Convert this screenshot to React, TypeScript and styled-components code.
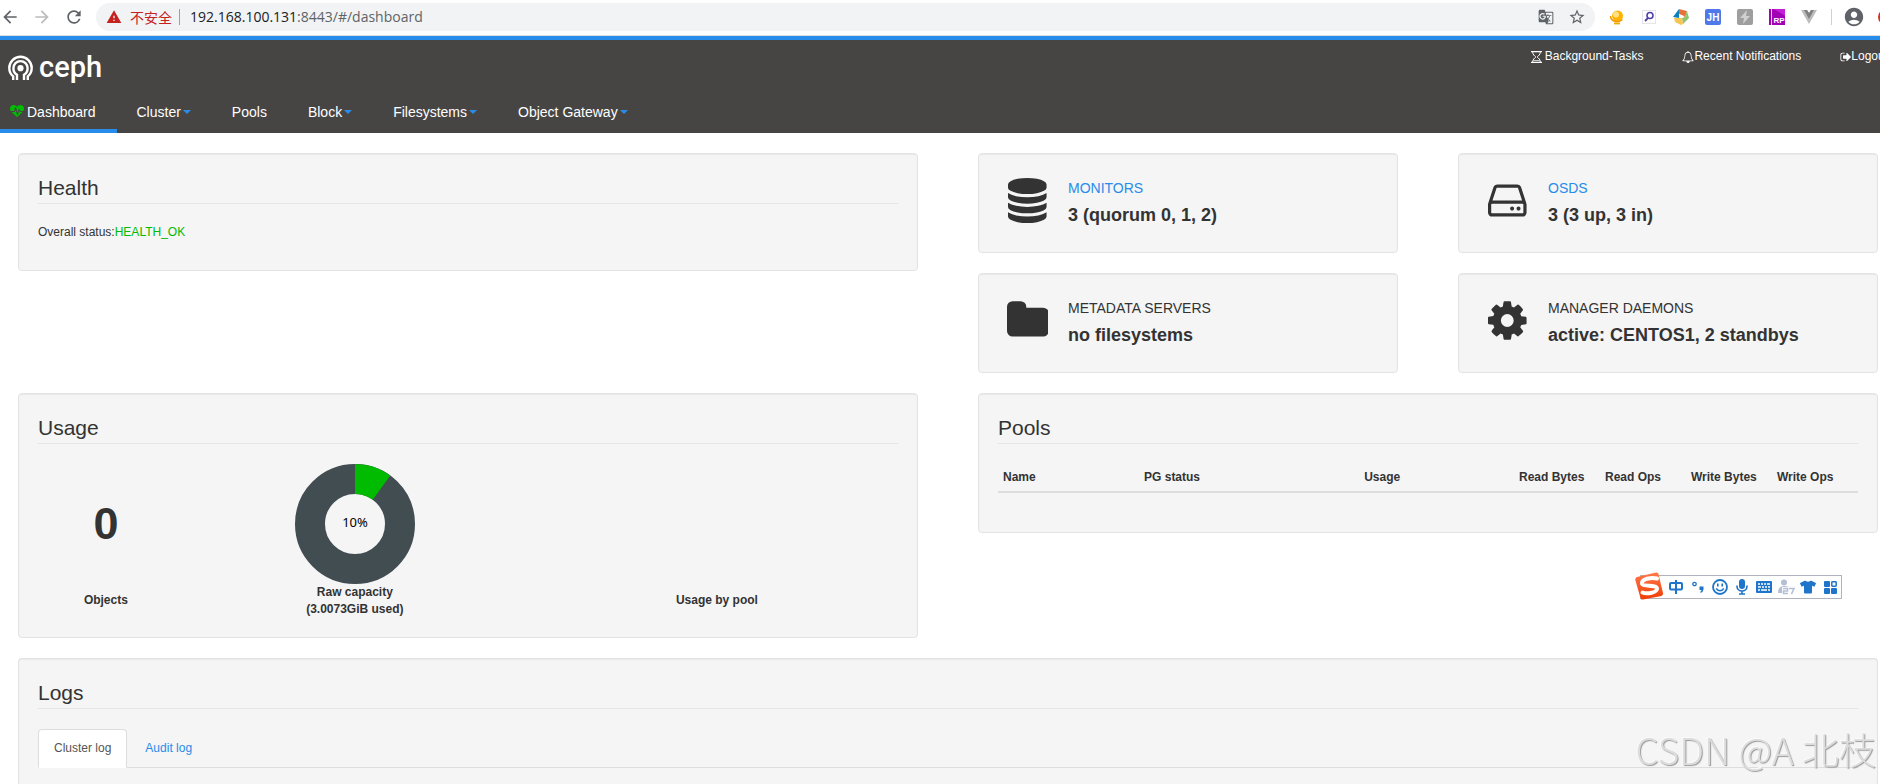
import React, { useState } from "react";
import styled, { createGlobalStyle } from "styled-components";
import {
  MdArrowBack,
  MdArrowForward,
  MdRefresh,
  MdWarning,
  MdGTranslate,
  MdStarBorder,
  MdAccountCircle,
} from "react-icons/md";
import { FaTshirt } from "react-icons/fa";

const color = {
  blue: "#288cea",
  dark: "#474544",
  green: "#00bb00",
  slate: "#424d52",
  text: "#333333",
  well: "#f5f5f5",
  ime: "#1f75c9",
};

const GlobalStyle = createGlobalStyle`
  *, *::before, *::after { box-sizing: border-box; }
  body {
    margin: 0;
    background: #fff;
    color: ${color.text};
    font-family: "Liberation Sans", Arial, sans-serif;
    font-size: 12px;
    line-height: 17px;
  }
  a { text-decoration: none; }
  button { font: inherit; border: 0; background: none; padding: 0; }
  h1, h2, h3, p, ul { margin: 0; padding: 0; font-weight: 400; }
  ul { list-style: none; }
  svg { display: block; flex: none; }
`;

const Shell = styled.div`
  display: flex;
  flex-direction: column;
  height: 100vh;
  overflow: hidden;
`;

/* Browser chrome */

const BrowserBar = styled.div`
  display: flex;
  align-items: center;
  flex: none;
  height: 36px;
  padding-bottom: 2px;
  border-bottom: 1px solid #dadce0;
  overflow: hidden;
`;

const NavButtons = styled.div`
  display: flex;
  gap: 12px;
  margin-right: 12px;
`;

const IconButton = styled.button<{ $tone?: string }>`
  display: flex;
  align-items: center;
  justify-content: center;
  flex: none;
  color: ${(p) => p.$tone ?? "#5f6368"};
`;

const AddressBar = styled.div`
  display: flex;
  align-items: center;
  flex: 1;
  height: 28px;
  padding: 0 9px 0 10px;
  border-radius: 14px;
  background: #f1f3f4;
  font-family: "Open Sans", "Noto Sans CJK SC", sans-serif;
  font-size: 14px;
  line-height: 20px;
`;

const Insecure = styled.span`
  display: flex;
  align-items: center;
  gap: 8px;
  padding-right: 7px;
  border-right: 1px solid #9aa0a6;
  margin-right: 10px;
  color: #c5221f;
  font-family: "Noto Sans CJK SC", sans-serif;
  line-height: 16px;
  white-space: nowrap;
`;

const Host = styled.label`
  color: #202124;
`;

const PathInput = styled.input`
  flex: 1;
  min-width: 0;
  padding: 0;
  border: 0;
  outline: 0;
  background: none;
  color: #5f6368;
  font: inherit;
`;

const AddressActions = styled.div`
  display: flex;
  gap: 14px;
`;

const Extensions = styled.div`
  display: flex;
  align-items: center;
  gap: 16px;
  margin-left: 14px;
`;

const ExtDivider = styled.span`
  width: 1px;
  height: 16px;
  margin: 0 11px 0 14px;
  background: #cfd1d4;
`;

const UpdateDot = styled.span`
  flex: none;
  width: 16px;
  height: 16px;
  margin: 0 -14px 0 13px;
  border-radius: 50%;
  background: #d93025;
`;

/* Ceph header */

const Header = styled.header`
  flex: none;
  border-top: 4px solid ${color.blue};
  background: ${color.dark};
  color: #fff;
  overflow: hidden;
`;

const BrandRow = styled.div`
  display: flex;
  justify-content: space-between;
  align-items: flex-start;
  height: 51px;
`;

const Brand = styled.a`
  display: flex;
  align-items: flex-start;
  gap: 6px;
  padding: 15px 0 0 8px;
  color: #fff;
  font: 500 29px/24px Roboto, sans-serif;
`;

const Utilities = styled.ul`
  display: flex;
  gap: 39px;
  margin-right: -8px;
  padding-top: 8px;
  white-space: nowrap;
`;

const UtilityLink = styled.a<{ $gap?: number }>`
  display: flex;
  align-items: center;
  gap: ${(p) => p.$gap ?? 0}px;
  color: #fff;
`;

const MainNav = styled.ul`
  display: flex;
  font-size: 14px;
  line-height: 20px;
`;

const NavLink = styled.a<{ $active?: boolean }>`
  display: flex;
  align-items: center;
  gap: ${(p) => (p.$active ? 3 : 2)}px;
  height: 42px;
  padding: 4px 21px 0 ${(p) => (p.$active ? 10 : 20)}px;
  border-bottom: 4px solid ${(p) => (p.$active ? color.blue : "transparent")};
  color: #fff;
  white-space: nowrap;
`;

const Caret = styled.span`
  border: 4px solid transparent;
  border-top-color: ${color.blue};
  border-bottom: 0;
`;

/* Dashboard */

const Dashboard = styled.main`
  display: grid;
  grid-template-columns: minmax(0, 1fr) minmax(0, 1fr);
  grid-template-rows: auto auto 1fr;
  gap: 20px 60px;
  align-items: start;
  flex: 1;
  min-height: 0;
  padding: 20px 2px 0 18px;
`;

const Well = styled.section<{ $wide?: boolean }>`
  padding: 19px;
  border: 1px solid #e3e3e3;
  border-radius: 4px;
  background: ${color.well};
  box-shadow: inset 0 1px 1px rgba(0, 0, 0, 0.05);
  grid-column: ${(p) => (p.$wide ? "1 / -1" : "auto")};
`;

const Legend = styled.h2`
  margin-bottom: 20px;
  border-bottom: 1px solid #e5e5e5;
  font-size: 21px;
  line-height: 30px;
`;

const Status = styled.p`
  margin-bottom: 10px;
`;

const Ok = styled.span`
  color: ${color.green};
`;

const StatGrid = styled.div`
  display: grid;
  grid-template-columns: 1fr 1fr;
  gap: 20px 60px;
`;

const StatCard = styled(Well)`
  display: flex;
  align-items: flex-start;
  height: 100px;
  padding-top: 4px;
  padding-left: 26px;
`;

const StatIcon = styled.div`
  display: flex;
  justify-content: center;
  width: 45px;
  margin: 20px 18px 0 0;
`;

const StatLabel = styled.h3`
  padding-top: 20px;
  font-size: 14px;
  line-height: 20px;
`;

const StatLink = styled.a`
  color: ${color.blue};
`;

const StatValue = styled.p`
  padding-top: 4px;
  font-size: 18px;
  font-weight: 700;
  line-height: 26px;
`;

const UsageGrid = styled.div`
  display: grid;
  grid-template-columns: 3fr 8fr 8fr;
  grid-template-rows: 120px 34px;
  justify-items: center;
  align-items: center;
  font-weight: 700;
  text-align: center;
`;

const ObjectCount = styled.div`
  font-size: 45px;
  line-height: 50px;
`;

const Capacity = styled.figure`
  grid-column: 2;
  grid-row: 1 / span 2;
  display: flex;
  flex-direction: column;
  align-items: center;
  margin: 0;
`;

const Caption = styled.div<{ $column: number }>`
  grid-column: ${(p) => p.$column};
  grid-row: 2;
  padding-bottom: 2px;
`;

const PoolTable = styled.table`
  width: 100%;
  margin-bottom: 20px;
  border-collapse: collapse;
  table-layout: fixed;
`;

const PoolHead = styled.th<{ $width: number }>`
  width: ${(p) => p.$width}%;
  padding: 5px;
  border-bottom: 2px solid #ddd;
  text-align: left;
  white-space: nowrap;
`;

const LogsWell = styled(Well)`
  align-self: stretch;
  border-bottom: 0;
  border-radius: 4px 4px 0 0;
`;

const Tabs = styled.div`
  display: flex;
  gap: 2px;
  border-bottom: 1px solid #ddd;
`;

const Tab = styled.button<{ $active: boolean }>`
  margin-bottom: -1px;
  padding: 10px 15px;
  border: 1px solid ${(p) => (p.$active ? "#ddd" : "transparent")};
  border-bottom-color: ${(p) => (p.$active ? "#fff" : "transparent")};
  border-radius: 4px 4px 0 0;
  background: ${(p) => (p.$active ? "#fff" : "transparent")};
  color: ${(p) => (p.$active ? "#555" : color.blue)};
  cursor: pointer;
`;

/* Floating layers */

const ImeBar = styled.div`
  position: fixed;
  top: 575px;
  right: 38px;
  display: flex;
  align-items: center;
  gap: 6px;
  height: 24px;
  padding: 0 3px 0 27px;
  border: 1px solid #b0b3bd;
  background: #fff;
  color: ${color.ime};
`;

const ImeLogo = styled.span`
  position: absolute;
  left: -6px;
  top: -4px;
`;

const ImeButton = styled(IconButton)`
  width: 16px;
  height: 20px;
`;

const Watermark = styled.div`
  position: fixed;
  right: 4px;
  bottom: 11px;
  color: #dcdcdc;
  font: 300 37px/48px "Noto Sans CJK SC", sans-serif;
  text-shadow: 1px 1px 1px #9a9a9a, -1px -1px 0 #fafafa;
  pointer-events: none;
`;

type GlyphProps = { width: number; size: number; path: string; fill?: string };

/* Glyph on a 1792-unit em square, as wide as its own advance. */
const Glyph = ({ width, size, path, fill = "currentColor" }: GlyphProps) => (
  <svg
    viewBox={`0 0 ${width} 1792`}
    width={(width / 1792) * size}
    height={size}
    fill={fill}
    fillRule="evenodd"
    aria-hidden="true"
  >
    <path d={path} />
  </svg>
);

const glyphs = {
  database: {
    width: 1536,
    path: "M768 768q237 0 443-43t325-127v170q0 69-103 128t-280 93.5-385 34.5-385-34.5-280-93.5-103-128v-170q119 84 325 127t443 43zm0 768q237 0 443-43t325-127v170q0 69-103 128t-280 93.5-385 34.5-385-34.5-280-93.5-103-128v-170q119 84 325 127t443 43zm0-384q237 0 443-43t325-127v170q0 69-103 128t-280 93.5-385 34.5-385-34.5-280-93.5-103-128v-170q119 84 325 127t443 43zm0-1152q208 0 385 34.5t280 93.5 103 128v128q0 69-103 128t-280 93.5-385 34.5-385-34.5-280-93.5-103-128v-128q0-69 103-128t280-93.5 385-34.5z",
  },
  folder: {
    width: 1664,
    path: "M1664 608v704q0 92-66 158t-158 66h-1216q-92 0-158-66t-66-158v-960q0-92 66-158t158-66h320q92 0 158 66t66 158v32h672q92 0 158 66t66 158z",
  },
  drive: {
    width: 1536,
    path: "M1040 1216q0 33-23.5 56.5t-56.5 23.5-56.5-23.5-23.5-56.5 23.5-56.5 56.5-23.5 56.5 23.5 23.5 56.5zm256 0q0 33-23.5 56.5t-56.5 23.5-56.5-23.5-23.5-56.5 23.5-56.5 56.5-23.5 56.5 23.5 23.5 56.5zm112 160v-320q0-13-9.5-22.5t-22.5-9.5h-1216q-13 0-22.5 9.5t-9.5 22.5v320q0 13 9.5 22.5t22.5 9.5h1216q13 0 22.5-9.5t9.5-22.5zm-1230-480h1180l-157-482q-4-13-16-21.5t-26-8.5h-782q-14 0-26 8.5t-16 21.5zm1358 160v320q0 66-47 113t-113 47h-1216q-66 0-113-47t-47-113v-320q0-25 16-75l197-606q17-53 63-86t101-33h782q55 0 101 33t63 86l197 606q16 50 16 75z",
  },
  cog: {
    width: 1536,
    path: "M1024 896q0-106-75-181t-181-75-181 75-75 181 75 181 181 75 181-75 75-181zm512-109v222q0 12-8 23t-20 13l-185 28q-19 54-39 91 35 50 107 138 10 12 10 25t-9 23q-27 37-99 108t-94 71q-12 0-26-9l-138-108q-44 23-91 38-16 136-29 186-7 28-36 28h-222q-14 0-24.5-8.5t-11.5-21.5l-28-184q-49-16-90-37l-141 107q-10 9-25 9-14 0-25-11-126-114-165-168-7-10-7-23 0-12 8-23 15-21 51-66.5t54-70.5q-27-50-41-99l-183-27q-13-2-21-12.5t-8-23.5v-222q0-12 8-23t19-13l186-28q14-46 39-92-40-57-107-138-10-12-10-24 0-10 9-23 26-36 98.5-107.5t94.5-71.5q13 0 26 10l138 107q44-23 91-38 16-136 29-186 7-28 36-28h222q14 0 24.5 8.5t11.5 21.5l28 184q49 16 90 37l142-107q9-9 24-9 13 0 25 10 129 119 165 170 7 8 7 22 0 12-8 23-15 21-51 66.5t-54 70.5q26 50 41 98l183 28q13 2 21 12.5t8 23.5z",
  },
  heartbeat: {
    width: 1792,
    path: "M1280 896h305q-5 6-10 10.5t-9 7.5l-3 4-623 600q-18 18-44 18t-44-18l-624-602q-5-2-21-20h369q22 0 39.5-13.5t22.5-34.5l70-281 190 667q6 20 23 33t39 13q21 0 38-13t23-33l146-485 56 112q18 35 57 35zm512-428q0 145-103 300h-369l-111-221q-8-17-25.5-27t-36.5-8q-45 5-56 46l-129 430-196-686q-6-20-23.5-33t-39.5-13-39 13.5-22 34.5l-116 464h-423q-103-155-103-300 0-220 127-344t351-124q62 0 126.5 21.5t120 58 95.5 68.5 76 68q36-36 76-68t95.5-68.5 120-58 126.5-21.5q224 0 351 124t127 344z",
  },
  bell: {
    width: 1792,
    path: "M912 1696q0-16-16-16-59 0-101.5-42.5t-42.5-101.5q0-16-16-16t-16 16q0 73 51.5 124.5t124.5 51.5q16 0 16-16zm-666-288h1300q-266-300-266-832 0-51-24-105t-69-103-121.5-80.5-169.5-31.5-169.5 31.5-121.5 80.5-69 103-24 105q0 532-266 832zm1482 0q0 52-38 90t-90 38h-448q0 106-75 181t-181 75-181-75-75-181h-448q-52 0-90-38t-38-90q50-42 91-88t85-119.5 74.5-158.5 50-206 19.5-260q0-152 117-282.5t307-158.5q-8-19-8-39 0-40 28-68t68-28 68 28 28 68q0 20-8 39 190 28 307 158.5t117 282.5q0 139 19.5 260t50 206 74.5 158.5 85 119.5 91 88z",
  },
  signOut: {
    width: 1664,
    path: "M704 1440q0 4 1 20t.5 26.5-3 23.5-10 19.5-20.5 6.5h-320q-119 0-203.5-84.5t-84.5-203.5v-704q0-119 84.5-203.5t203.5-84.5h320q13 0 22.5 9.5t9.5 22.5q0 4 1 20t.5 26.5-3 23.5-10 19.5-20.5 6.5h-320q-66 0-113 47t-47 113v704q0 66 47 113t113 47h312l11.500 1 11.500 3 8 5.500 7 9 2 13.500zm928-544q0 26-19 45l-544 544q-19 19-45 19t-45-19-19-45v-288h-448q-26 0-45-19t-19-45v-384q0-26 19-45t45-19h448v-288q0-26 19-45t45-19 45 19l544 544q19 19 19 45z",
  },
};

const Hourglass = () => (
  <svg width="11" height="12" viewBox="0 0 11 12" fill="none" stroke="currentColor" aria-hidden="true">
    <path d="M0 .600H11M0 11.400H11" strokeWidth="1.200" />
    <path d="M1.700 1C1.700 3.600 3.500 4.800 4.800 6C3.500 7.200 1.700 8.400 1.700 11M9.300 1C9.300 3.600 7.500 4.800 6.200 6C7.500 7.200 9.300 8.400 9.300 11" />
    <path d="M2.400 9.600H8.600" strokeWidth=".8" />
  </svg>
);

const CephMark = () => (
  <svg width="25" height="26" viewBox="0 0 25 26" fill="none" stroke="#fff" aria-hidden="true">
    <path strokeWidth="2.400" d="M5.200 25V21.400C2.800 19.400 1.300 16.400 1.300 13A11.200 11.200 0 0 1 23.700 13C23.700 16.400 22.200 19.400 19.800 21.400V25" />
    <path strokeWidth="2.400" d="M9 25V19.800C6.800 18.500 5.400 16 5.400 13.200A7.100 7.100 0 0 1 19.600 13.200C19.600 16 18.200 18.500 16 19.800V25" />
    <circle cx="12.500" cy="13.200" r="3.100" fill="#fff" stroke="none" />
  </svg>
);

const ExtensionIcons = () => (
  <Extensions>
    <IconButton aria-label="Globe extension">
      <svg width="16" height="16" viewBox="0 0 16 16">
        <circle cx="8.500" cy="7" r="5.500" fill="#ffb300" />
        <circle cx="7" cy="5.500" r="3" fill="#ffe082" />
        <path d="M1.500 7c0 5 7 8 12 3.500" stroke="#f29900" strokeWidth="1.500" fill="none" />
        <path d="M5 14.500h6" stroke="#f2a900" strokeWidth="1.800" />
      </svg>
    </IconButton>
    <IconButton aria-label="Search extension">
      <svg width="16" height="16" viewBox="0 0 16 16">
        <rect x="1.500" y="1.500" width="13" height="13" fill="#fff" stroke="#e4e4ee" />
        <circle cx="9" cy="6.500" r="3" fill="none" stroke="#5140a8" strokeWidth="1.600" />
        <path d="M7 9l-3 3" stroke="#5140a8" strokeWidth="1.800" />
      </svg>
    </IconButton>
    <IconButton aria-label="Cube extension">
      <svg width="16" height="16" viewBox="0 0 16 16">
        <path d="M6 0L0 8l6 1z" fill="#0b7fb8" />
        <path d="M6 0l8 2-2 6-6-3z" fill="#e8703a" />
        <path d="M14 2l2 7-6 6-1-6 3-1z" fill="#8dc26f" />
        <path d="M1 9l8 0 1 6-2 1-6-3z" fill="#f6c552" />
        <path d="M6 5l5 2-2 2H6z" fill="#fff" />
      </svg>
    </IconButton>
    <IconButton aria-label="JH extension">
      <svg width="16" height="16" viewBox="0 0 16 16">
        <rect width="16" height="16" rx="2" fill="#4f79e8" />
        <text x="8" y="12" textAnchor="middle" fontFamily="Liberation Sans" fontWeight="700" fontSize="10" fill="#fff">JH</text>
      </svg>
    </IconButton>
    <IconButton aria-label="Lightning extension">
      <svg width="16" height="16" viewBox="0 0 16 16">
        <rect width="16" height="16" rx="2" fill="#9e9e9e" />
        <path d="M10 1L3 9h4l-1 6 7-8H9z" fill="#d0d0d0" />
      </svg>
    </IconButton>
    <IconButton aria-label="RP extension">
      <svg width="16" height="16" viewBox="0 0 16 16">
        <rect width="16" height="16" fill="#a100b4" />
        <path d="M4 0h12v7L10 3z" fill="#c21fd6" />
        <path d="M2.500 0v16" stroke="#f3d4f7" />
        <text x="10" y="14" textAnchor="middle" fontFamily="Liberation Sans" fontWeight="700" fontSize="8" fill="#fff">RP</text>
      </svg>
    </IconButton>
    <IconButton aria-label="Vue extension">
      <svg width="16" height="16" viewBox="0 0 16 16">
        <path d="M0 1h6l2 3 2-3h6L8 15z" fill="#bdbdbd" />
        <path d="M3 1h3l2 3 2-3h3L8 10z" fill="#808080" />
      </svg>
    </IconButton>
  </Extensions>
);

const DonutChart = () => (
  <svg width="120" height="120" viewBox="-60 -60 120 120" role="img" aria-label="Raw capacity 10%">
    <circle r="45" fill="none" stroke={color.slate} strokeWidth="30" />
    <path d="M0 -60A60 60 0 0 1 35.270 -48.540L17.630 -24.270A30 30 0 0 0 0 -30Z" fill={color.green} />
    <text y="3" textAnchor="middle" fontFamily="Noto Sans" fontSize="13" fontWeight="400" fill="#000">
      10%
    </text>
  </svg>
);

const navItems = [
  { label: "Cluster", menu: true },
  { label: "Pools", menu: false },
  { label: "Block", menu: true },
  { label: "Filesystems", menu: true },
  { label: "Object Gateway", menu: true },
];

const stats = [
  { glyph: glyphs.database, label: "MONITORS", value: "3 (quorum 0, 1, 2)", link: true },
  { glyph: glyphs.drive, label: "OSDS", value: "3 (3 up, 3 in)", link: true },
  { glyph: glyphs.folder, label: "METADATA SERVERS", value: "no filesystems", link: false },
  { glyph: glyphs.cog, label: "MANAGER DAEMONS", value: "active: CENTOS1, 2 standbys", link: false },
];

const poolColumns = [
  { label: "Name", width: 16.4 },
  { label: "PG status", width: 25.6 },
  { label: "Usage", width: 18 },
  { label: "Read Bytes", width: 10 },
  { label: "Read Ops", width: 10 },
  { label: "Write Bytes", width: 10 },
  { label: "Write Ops", width: 10 },
];

const InputMethodBar = () => (
  <ImeBar>
    <ImeLogo>
      <svg width="28" height="28" viewBox="0 0 28 28" aria-hidden="true">
        <defs>
          <linearGradient id="sogou" x1="0" y1="0" x2="0" y2="1">
            <stop offset="0" stopColor="#ff7a4a" />
            <stop offset="1" stopColor="#f03c06" />
          </linearGradient>
        </defs>
        <path d="M2 5L21 .500Q23 0 23.500 2L28 21Q28.300 23 26.500 24L8 27.500Q6 28 5.500 26L.300 8Q0 6 2 5Z" fill="url(#sogou)" />
        <path d="M22 6.500C16 5 6.500 7 7 11.500C7.500 15 21.500 12.500 22 16.500C22.300 20.500 12 22.500 7.500 20.500" fill="none" stroke="#fff" strokeWidth="4" strokeLinecap="round" />
      </svg>
    </ImeLogo>
    <ImeButton $tone={color.ime} aria-label="Chinese mode">
      <svg width="14" height="14" viewBox="0 0 14 14" fill="none" stroke="currentColor" strokeWidth="2">
        <rect x="1" y="3" width="12" height="6.500" rx="1" />
        <path d="M7 0v14" />
      </svg>
    </ImeButton>
    <ImeButton $tone={color.ime} aria-label="Punctuation">
      <svg width="12" height="14" viewBox="0 0 12 14">
        <circle cx="2.500" cy="4" r="1.700" fill="none" stroke="currentColor" strokeWidth="1.300" />
        <path d="M7.500 6.500h4v3q-.5 3-3 3.500v-1.500q.8-.5 1-1.500h-2z" fill="currentColor" />
      </svg>
    </ImeButton>
    <ImeButton $tone={color.ime} aria-label="Emoji">
      <svg width="16" height="16" viewBox="0 0 16 16" fill="none" stroke="currentColor">
        <circle cx="8" cy="8" r="7" strokeWidth="1.800" />
        <path d="M5.800 4.500v3M10.200 4.500v3" strokeWidth="1.600" />
        <path d="M4.200 9.500Q8 14 11.800 9.500" strokeWidth="1.500" />
      </svg>
    </ImeButton>
    <ImeButton $tone={color.ime} aria-label="Voice input">
      <svg width="12" height="16" viewBox="0 0 12 16">
        <rect x="3" y="0" width="6" height="10" rx="3" fill="currentColor" />
        <path d="M1 6.500v1a5 4.500 0 0 0 10 0v-1M6 12v3M3 15h6" fill="none" stroke="currentColor" strokeWidth="1.600" />
      </svg>
    </ImeButton>
    <ImeButton $tone={color.ime} aria-label="Soft keyboard">
      <svg width="16" height="12" viewBox="0 0 16 12">
        <rect width="16" height="12" rx="1" fill="currentColor" />
        <path d="M2 3h2M5 3h2M8 3h2M11 3h3M2 6h3M6 6h2M9 6h2M12 6h2M2 9h2M5 9h6M12 9h2" stroke="#fff" strokeWidth="1.600" />
      </svg>
    </ImeButton>
    <ImeButton $tone="#b4bfd6" aria-label="Account">
      <svg width="17" height="16" viewBox="0 0 17 16">
        <circle cx="6" cy="3.500" r="3" fill="currentColor" />
        <path d="M0 14q0-7 6-7 3 0 5 1H4v6z" fill="currentColor" />
        <path d="M5 9.500h4.500v2.500h-4v2.500h4.500M11 9.500h5l-2.500 5.500" fill="none" stroke="currentColor" strokeWidth="1.600" />
      </svg>
    </ImeButton>
    <ImeButton $tone={color.ime} aria-label="Skins">
      <FaTshirt size={16} />
    </ImeButton>
    <ImeButton $tone={color.ime} aria-label="Toolbox">
      <svg width="13" height="13" viewBox="0 0 13 13" fill="currentColor">
        <rect width="6" height="6" rx="1" />
        <rect x="7.800" y=".8" width="4.400" height="4.400" rx=".6" fill="none" stroke="currentColor" strokeWidth="1.500" />
        <rect y="7" width="6" height="6" rx="1" />
        <rect x="7" y="7" width="6" height="6" rx="1" />
      </svg>
    </ImeButton>
  </ImeBar>
);

export default function App() {
  const [tab, setTab] = useState("Cluster log");
  const [path, setPath] = useState(":8443/#/dashboard");

  return (
    <Shell>
      <GlobalStyle />
      <BrowserBar>
        <NavButtons>
          <IconButton aria-label="Back"><MdArrowBack size={20} /></IconButton>
          <IconButton aria-label="Forward" $tone="#babcbe"><MdArrowForward size={20} /></IconButton>
          <IconButton aria-label="Reload"><MdRefresh size={20} /></IconButton>
        </NavButtons>
        <AddressBar>
          <Insecure><MdWarning size={16} />不安全</Insecure>
          <Host htmlFor="address">192.168.100.131</Host>
          <PathInput id="address" value={path} onChange={(e) => setPath(e.target.value)} />
          <AddressActions>
            <IconButton aria-label="Translate"><MdGTranslate size={16} /></IconButton>
            <IconButton aria-label="Bookmark"><MdStarBorder size={18} /></IconButton>
          </AddressActions>
        </AddressBar>
        <ExtensionIcons />
        <ExtDivider />
        <IconButton aria-label="Profile"><MdAccountCircle size={22} /></IconButton>
        <UpdateDot />
      </BrowserBar>

      <Header>
        <BrandRow>
          <Brand href="#/dashboard"><CephMark />ceph</Brand>
          <Utilities>
            <li><UtilityLink href="#/tasks" $gap={3}><Hourglass />Background-Tasks</UtilityLink></li>
            <li><UtilityLink href="#/notifications"><Glyph {...glyphs.bell} size={12} />Recent Notifications</UtilityLink></li>
            <li><UtilityLink href="#/logout"><Glyph {...glyphs.signOut} size={12} />Logout</UtilityLink></li>
          </Utilities>
        </BrandRow>
        <nav>
          <MainNav>
            <li>
              <NavLink href="#/dashboard" $active>
                <Glyph {...glyphs.heartbeat} size={14} fill={color.green} />Dashboard
              </NavLink>
            </li>
            {navItems.map((item) => (
              <li key={item.label}>
                <NavLink href="#/">{item.label}{item.menu && <Caret />}</NavLink>
              </li>
            ))}
          </MainNav>
        </nav>
      </Header>

      <Dashboard>
        <Well>
          <Legend>Health</Legend>
          <Status>Overall status:<Ok>HEALTH_OK</Ok></Status>
        </Well>
        <StatGrid>
          {stats.map((s) => (
            <StatCard key={s.label}>
              <StatIcon><Glyph {...s.glyph} size={45} /></StatIcon>
              <div>
                <StatLabel>{s.link ? <StatLink href="#/">{s.label}</StatLink> : s.label}</StatLabel>
                <StatValue>{s.value}</StatValue>
              </div>
            </StatCard>
          ))}
        </StatGrid>
        <Well>
          <Legend>Usage</Legend>
          <UsageGrid>
            <ObjectCount>0</ObjectCount>
            <Caption $column={1}>Objects</Caption>
            <Capacity>
              <DonutChart />
              <figcaption>Raw capacity<br />(3.0073GiB used)</figcaption>
            </Capacity>
            <Caption $column={3}>Usage by pool</Caption>
          </UsageGrid>
        </Well>
        <Well>
          <Legend>Pools</Legend>
          <PoolTable>
            <thead>
              <tr>
                {poolColumns.map((c) => (
                  <PoolHead key={c.label} $width={c.width} scope="col">{c.label}</PoolHead>
                ))}
              </tr>
            </thead>
          </PoolTable>
        </Well>
        <LogsWell $wide>
          <Legend>Logs</Legend>
          <Tabs role="tablist">
            {["Cluster log", "Audit log"].map((name) => (
              <Tab key={name} role="tab" aria-selected={tab === name} $active={tab === name} onClick={() => setTab(name)}>
                {name}
              </Tab>
            ))}
          </Tabs>
        </LogsWell>
      </Dashboard>

      <InputMethodBar />
      <Watermark>CSDN @A 北枝</Watermark>
    </Shell>
  );
}
